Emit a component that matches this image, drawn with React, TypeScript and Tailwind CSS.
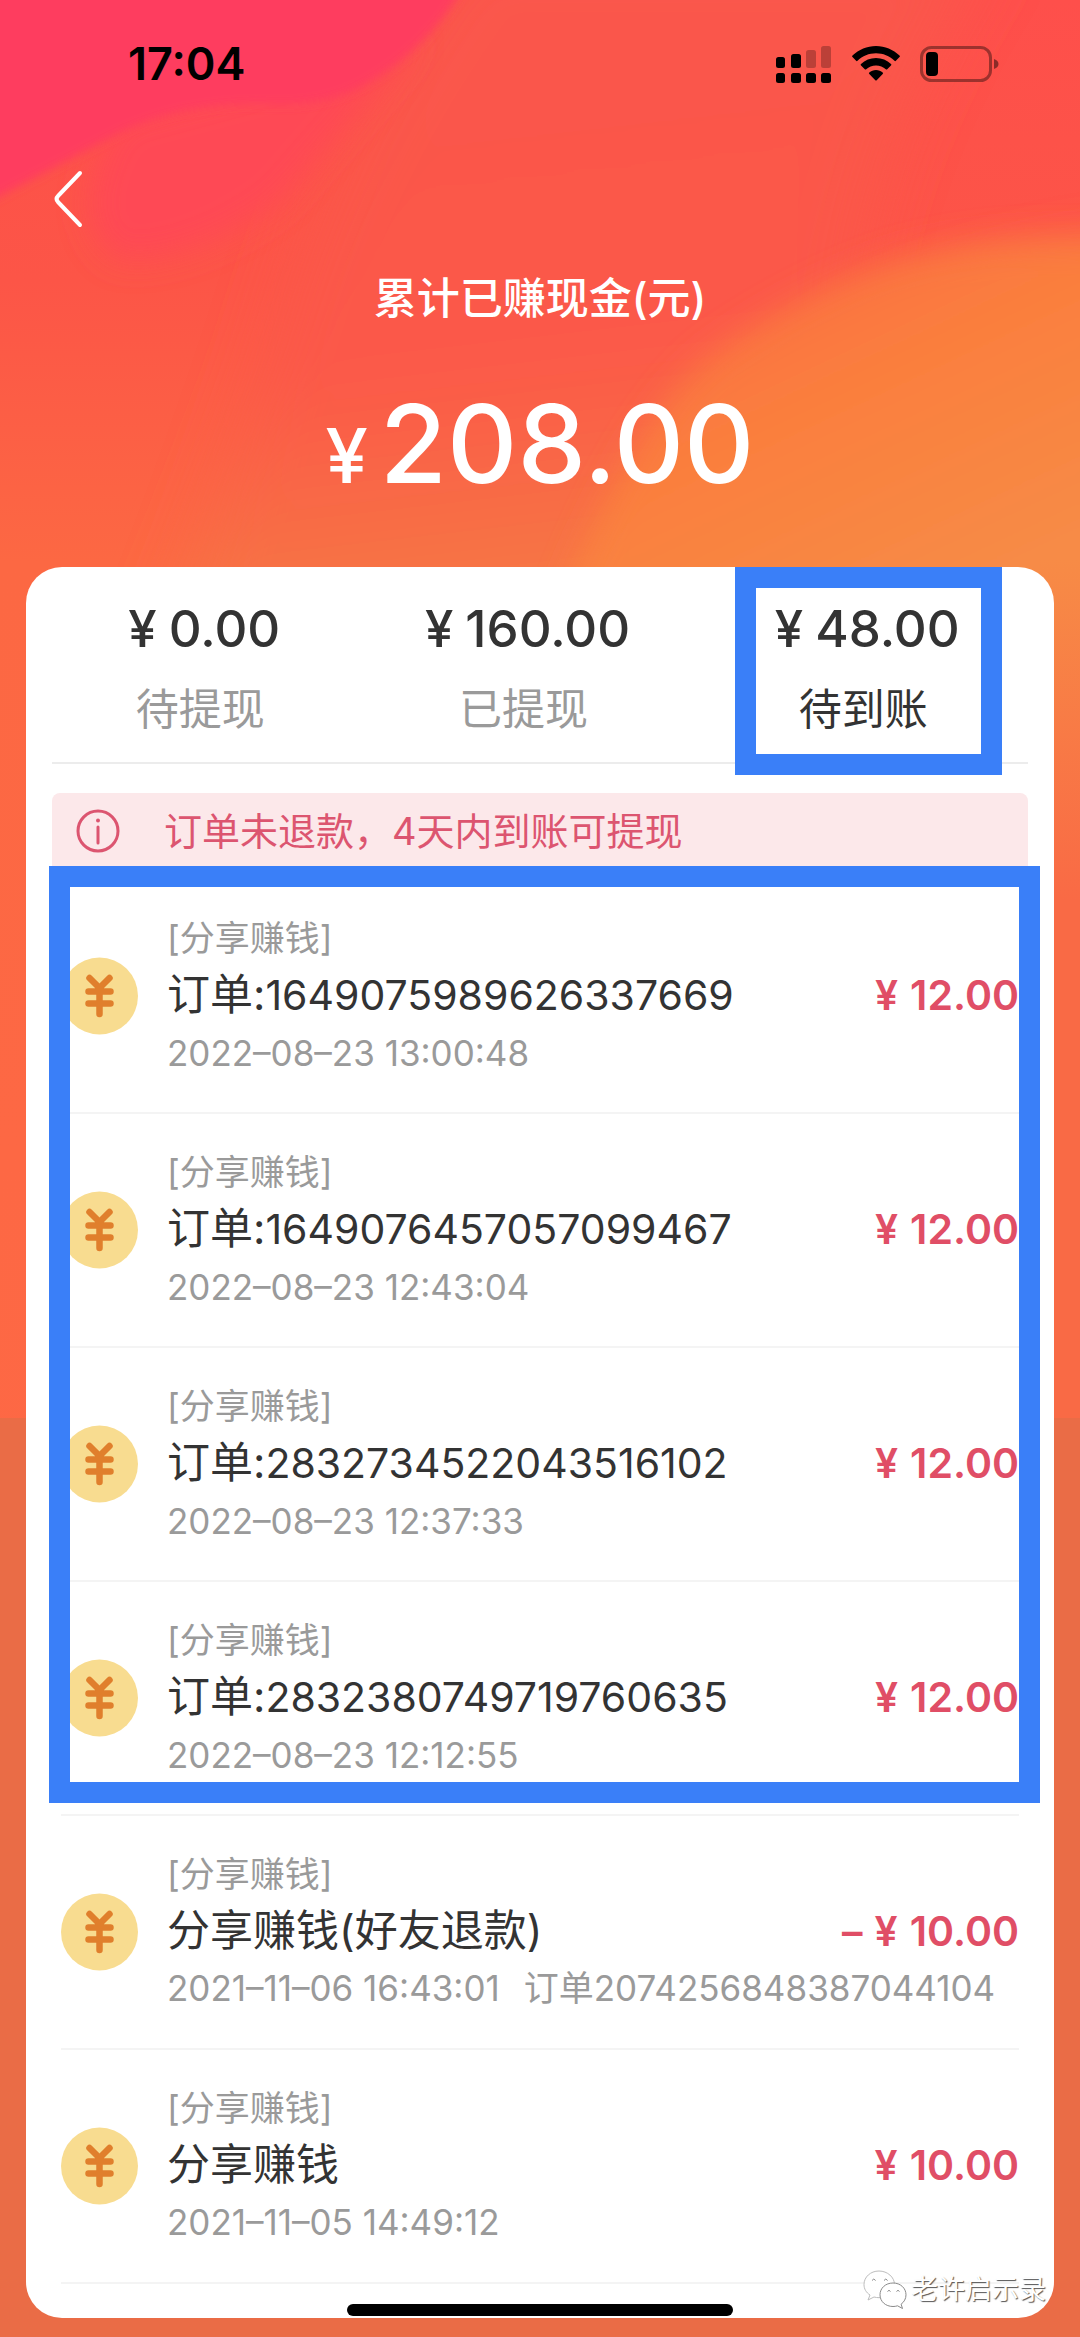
type Entry = {
  title: string;
  orderNo?: string;
  time: string;
  note?: string;
  negative?: boolean;
  amount: string;
};

const pending: Entry[] = [
  { title: "订单:", orderNo: "1649075989626337669", time: "2022–08–23 13:00:48", amount: "12.00" },
  { title: "订单:", orderNo: "1649076457057099467", time: "2022–08–23 12:43:04", amount: "12.00" },
  { title: "订单:", orderNo: "2832734522043516102", time: "2022–08–23 12:37:33", amount: "12.00" },
  { title: "订单:", orderNo: "2832380749719760635", time: "2022–08–23 12:12:55", amount: "12.00" },
];

const earlier: Entry[] = [
  {
    title: "分享赚钱(好友退款)",
    time: "2021–11–06 16:43:01",
    note: "订单2074256848387044104",
    negative: true,
    amount: "10.00",
  },
  { title: "分享赚钱", time: "2021–11–05 14:49:12", amount: "10.00" },
];

const tabs = [
  { label: "待提现", amount: "0.00", active: false },
  { label: "已提现", amount: "160.00", active: false },
  { label: "待到账", amount: "48.00", active: true },
];

function Background() {
  return (
    <svg
      aria-hidden
      className="absolute inset-0 -z-10 h-full w-full"
      viewBox="0 0 1080 2337"
      preserveAspectRatio="none"
    >
      <defs>
        <linearGradient id="base" x1="0" y1="0" x2="0" y2="1">
          <stop offset="0" stopColor="#fe4f4b" />
          <stop offset="0.12" stopColor="#fc5547" />
          <stop offset="0.24" stopColor="#fc6843" />
          <stop offset="1" stopColor="#ff6846" />
        </linearGradient>
        <linearGradient id="warm" gradientUnits="userSpaceOnUse" x1="780" y1="260" x2="940" y2="600">
          <stop offset="0" stopColor="#fb6f41" />
          <stop offset="0.4" stopColor="#fa7f3e" />
          <stop offset="1" stopColor="#f78b46" />
        </linearGradient>
        <linearGradient id="mid" gradientUnits="userSpaceOnUse" x1="560" y1="80" x2="620" y2="600">
          <stop offset="0" stopColor="#fa574b" />
          <stop offset="0.5" stopColor="#fb5848" />
          <stop offset="1" stopColor="#f67a43" />
        </linearGradient>
        <linearGradient id="side" gradientUnits="userSpaceOnUse" x1="0" y1="560" x2="0" y2="900">
          <stop offset="0" stopColor="#f78b46" />
          <stop offset="1" stopColor="#f96a45" />
        </linearGradient>
        <filter id="soft" x="-20%" y="-20%" width="140%" height="140%">
          <feGaussianBlur stdDeviation="30" />
        </filter>
        <filter id="haze" x="-20%" y="-20%" width="140%" height="140%">
          <feGaussianBlur stdDeviation="16" />
        </filter>
        <filter id="edge" x="-20%" y="-20%" width="140%" height="140%">
          <feGaussianBlur stdDeviation="5" />
        </filter>
      </defs>
      <rect width="1080" height="2337" fill="url(#base)" />
      <path
        d="M470 -60 Q330 120 270 340 Q210 520 160 640 L900 640 Q760 300 1000 -60Z"
        fill="url(#mid)"
        filter="url(#soft)"
      />
      {/* second pink fold below the corner */}
      <path d="M420 40 Q340 130 280 200 Q200 260 120 260 Q60 220 120 120Z" fill="#fe4a55" filter="url(#haze)" />
      <path
        d="M1140 250 Q960 270 830 350 Q690 450 600 640 L1140 640Z"
        fill="#fa7440"
        filter="url(#soft)"
      />
      <path
        d="M1120 240 Q960 230 860 272 Q780 305 710 355 Q620 430 540 660 L1120 660Z"
        fill="url(#warm)"
        filter="url(#haze)"
      />
      <path
        d="M-30 -30 H475 L456 0 Q415 62 350 92 Q310 108 260 104 Q180 104 118 134 Q50 170 -30 212Z"
        fill="#fe3e5e"
        filter="url(#edge)"
      />
      <rect x="1040" y="560" width="40" height="860" fill="url(#side)" />
      <rect y="1418" width="1080" height="919" fill="#ea6c46" />
    </svg>
  );
}

function SignalIcon() {
  return (
    <svg aria-hidden className="h-10 w-14" viewBox="0 0 56 40">
      <rect x="0" y="13" width="9" height="11" rx="2.5" />
      <rect x="15" y="10" width="10" height="14" rx="2.5" />
      <rect x="30" y="6" width="10" height="18" rx="2.5" opacity="0.25" />
      <rect x="45" y="2" width="10" height="22" rx="2.5" opacity="0.25" />
      <rect x="0" y="29" width="9" height="10" rx="2.5" />
      <rect x="15" y="29" width="10" height="10" rx="2.5" />
      <rect x="30" y="29" width="10" height="10" rx="2.5" />
      <rect x="45" y="29" width="10" height="10" rx="2.5" />
    </svg>
  );
}

function WifiIcon() {
  return (
    <svg aria-hidden className="h-9 w-12" viewBox="0 0 48 36">
      <path d="M24 0C15 0 6.800 3.500 .5 9.600a1 1 0 0 0 0 1.500l3.600 3.700a1 1 0 0 0 1.400 0C10.500 10 17 7.300 24 7.300S37.500 10 42.500 14.800a1 1 0 0 0 1.400 0l3.600-3.700a1 1 0 0 0 0-1.500C41.200 3.500 33 0 24 0z" />
      <path d="M24 12c-5.800 0-11 2.200-15 5.900a1 1 0 0 0 0 1.500l3.800 3.800a1 1 0 0 0 1.400 0c2.600-2.400 6-3.800 9.800-3.800s7.200 1.400 9.800 3.800a1 1 0 0 0 1.400 0l3.800-3.800a1 1 0 0 0 0-1.500c-4-3.700-9.200-5.900-15-5.900z" />
      <path d="M24 24c-2.600 0-4.900.9-6.700 2.400a1 1 0 0 0 0 1.500l6 6.300a1 1 0 0 0 1.400 0l6-6.300a1 1 0 0 0 0-1.500C28.900 24.900 26.600 24 24 24z" />
    </svg>
  );
}

function BatteryIcon() {
  return (
    <svg aria-hidden className="h-9 w-20" viewBox="0 0 80 36">
      <rect x="1.500" y="1.500" width="69" height="33" rx="10" fill="none" stroke="#000" strokeOpacity="0.38" strokeWidth="3" />
      <path d="M74 13c3 1 4.500 2.800 4.500 5s-1.500 4-4.500 5z" opacity="0.45" />
      <rect x="6" y="6" width="12" height="24" rx="4" />
    </svg>
  );
}

function CoinIcon() {
  return (
    <svg aria-hidden className="h-[78px] w-[78px] shrink-0" viewBox="0 0 78 78">
      <circle cx="38.500" cy="39" r="38.500" fill="#f8dc90" />
      <path
        d="M28.500 21l10 10 10-10M27.500 34.500h22M27.500 46.500h22M38.500 31v26"
        fill="none"
        stroke="#e07f2c"
        strokeWidth="6.500"
        strokeLinecap="round"
      />
    </svg>
  );
}

function InfoIcon() {
  return (
    <svg aria-hidden className="h-11 w-11 shrink-0" viewBox="0 0 44 44" fill="none" stroke="#dc5570" strokeWidth="3">
      <circle cx="22" cy="22" r="20" />
      <path d="M22 18v16" strokeLinecap="round" />
      <circle cx="22" cy="11.500" r="2" fill="#dc5570" stroke="none" />
    </svg>
  );
}

function WechatIcon() {
  return (
    <svg aria-hidden className="h-10 w-11" viewBox="0 0 44 40" fill="#fff" stroke="#8a8a8a" strokeWidth="1">
      <path d="M16 1C7.500 1 1 7 1 14.500c0 4.500 2.200 8 6 10.500l-2 5 6-3c1.700.4 3.300.7 5 .7 8.500 0 15.500-6 15.500-13.200S24.500 1 16 1z" stroke="#bdbdbd" />
      <path d="M30 13c-7.500 0-13 5.200-13 11.800s5.500 11.700 13 11.700c1.600 0 3-.2 4.500-.7l5 2.700-1.400-4.300c3-2.200 4.900-5.500 4.900-9.400C43 18.200 37.500 13 30 13z" />
      <path d="M9 10.500q1.800-3 3.600 0M21 10.500q1.800-3 3.600 0M24.500 21.500q1.500-2.500 3 0M33.500 21.500q1.500-2.500 3 0" fill="none" />
    </svg>
  );
}

function Row({ entry }: { entry: Entry }) {
  return (
    <li className="flex h-[234px] items-center border-b-2 border-[#f4f4f4]">
      <CoinIcon />
      <div className="ml-7 flex-1 whitespace-nowrap">
        <p className="text-[35px] leading-[56px] text-[#9a9a9a]">[分享赚钱]</p>
        <p className="text-[43px] leading-[56px] text-[#333333]">
          {entry.title}
          {entry.orderNo && <span className="text-[41px]">{entry.orderNo}</span>}
        </p>
        <div className="flex gap-6 text-[35px] leading-[60px] text-[#9a9a9a]">
          <time>{entry.time}</time>
          {entry.note && <span>{entry.note}</span>}
        </div>
      </div>
      {/* overlaps the long note line, so it takes little room of its own */}
      <p className="-ml-40 flex items-baseline gap-3 text-[41px] font-semibold text-[#e04e66]">
        {entry.negative && <span>–</span>}
        <span>¥</span>
        <span>{entry.amount}</span>
      </p>
    </li>
  );
}

export default function App() {
  return (
    <main className="relative isolate font-['Inter','Noto_Sans_CJK_SC',sans-serif]">
      <Background />

      {/* Status bar */}
      <header className="flex h-32 items-center justify-between pr-20 pl-32">
        <time className="text-[45px] font-semibold text-black">17:04</time>
        <div className="flex items-center gap-5">
          <SignalIcon />
          <WifiIcon />
          <BatteryIcon />
        </div>
      </header>

      <nav className="flex h-[142px] items-center px-12">
        <button type="button" aria-label="返回">
          <svg aria-hidden className="h-[58px] w-10" viewBox="0 0 40 58" fill="none" stroke="#fff" strokeWidth="4" strokeLinecap="round">
            <path d="M32 3L10 26q-3 3 0 6l22 23" />
          </svg>
        </button>
      </nav>

      {/* Total */}
      <section className="flex h-[297px] flex-col items-center text-white">
        <h1 className="text-[43px] leading-[56px] font-medium">累计已赚现金(元)</h1>
        <p className="mt-11 flex items-baseline gap-3 text-[109px] leading-[146px] font-medium">
          <span className="text-[76px]">¥</span>
          208.00
        </p>
      </section>

      <div className="px-[26px] pb-[19px]">
        <section className="relative rounded-[36px] bg-white px-[26px] pb-[34px]">
          <div className="flex h-[197px] justify-around border-b-2 border-[#ececec]" role="tablist">
            {tabs.map((tab) => (
              <button
                key={tab.label}
                type="button"
                role="tab"
                aria-selected={tab.active}
                className="relative flex flex-col items-center pt-8"
              >
                <span className="flex items-baseline gap-3 pl-2 text-[51px] leading-[60px] font-medium text-[#333333]">
                  <span>¥</span>
                  {tab.amount}
                </span>
                <span
                  className={
                    tab.active
                      ? "mt-5 text-[43px] leading-[60px] text-[#333333]"
                      : "mt-5 text-[43px] leading-[60px] text-[#9a9a9a]"
                  }
                >
                  {tab.label}
                </span>
                {tab.active && (
                  <span className="pointer-events-none absolute -right-[42px] -left-[32px] top-0 h-[208px] border-[21px] border-[#3a7ff8]" />
                )}
              </button>
            ))}
          </div>

          <p className="mt-[29px] flex h-[76px] items-center rounded-t-lg bg-[#fce8ea] pl-6 text-[38px] text-[#dc5570]">
            <InfoIcon />
            <span className="ml-11">订单未退款，4天内到账可提现</span>
          </p>

          <div className="mt-[11px] mr-[9px] ml-[9px]">
            <div className="relative">
              <ul>
                {pending.map((entry) => (
                  <Row key={entry.orderNo} entry={entry} />
                ))}
              </ul>
              <div className="pointer-events-none absolute -top-[14px] -right-[21px] bottom-[13px] -left-[12px] border-[21px] border-[#3a7ff8]" />
            </div>
            <ul>
              {earlier.map((entry) => (
                <Row key={entry.time} entry={entry} />
              ))}
            </ul>
          </div>

          {/* Home indicator */}
          <div className="absolute bottom-[2px] left-1/2 h-3 w-[386px] -translate-x-1/2 rounded-full bg-black" />

          {/* Watermark */}
          <div className="absolute right-2 bottom-2 flex items-center gap-1">
            <WechatIcon />
            <span className="text-[27px] leading-10 text-white [text-shadow:1px_1px_1px_#555555]">老许启示录</span>
          </div>
        </section>
      </div>
    </main>
  );
}
